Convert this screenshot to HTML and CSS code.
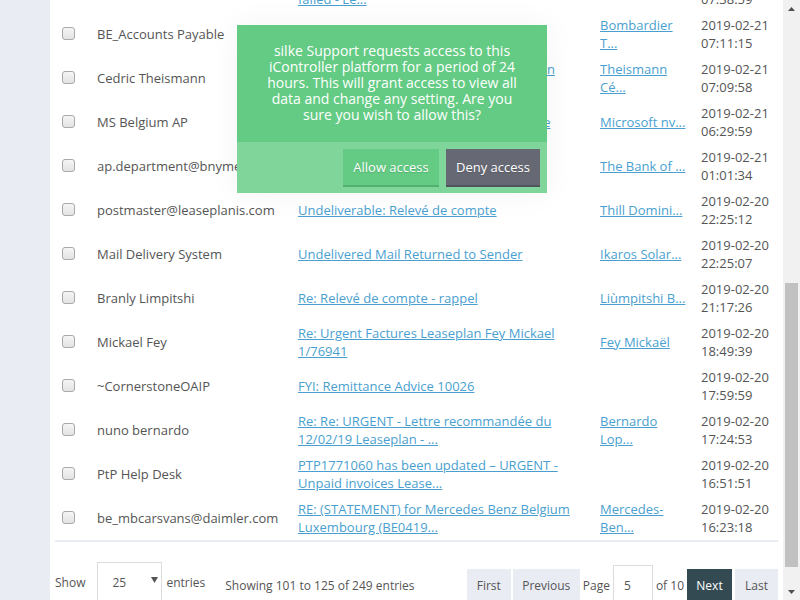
FILE: index.html
```html
<!DOCTYPE html>
<html>
<head>
<meta charset="utf-8">
<link rel="stylesheet" href="styles.css">
</head>
<body>
<div class="page">
  <div class="side"></div>
  <div class="main">
    <table class="grid">
      <colgroup>
        <col class="c-cb"><col class="c-name"><col class="c-subj"><col class="c-comp"><col class="c-date">
      </colgroup>
      <tbody>
        <tr><td><span class="cb"></span></td><td class="name">MAILER-DAEMON</td><td class="subj"><a href="#">Delivery Status Notification (Delivery<br>failed - Le...</a></td><td class="comp"></td><td class="date">2019-02-21 07:38:59</td></tr>
        <tr><td><span class="cb"></span></td><td class="name">BE_Accounts Payable</td><td class="subj"><a href="#">Payment Advice 4500123</a></td><td class="comp"><a href="#">Bombardier T...</a></td><td class="date">2019-02-21 07:11:15</td></tr>
        <tr><td><span class="cb"></span></td><td class="name">Cedric Theismann</td><td class="subj"><a href="#">Re: Herinnering openstaande facturen van Theismann</a></td><td class="comp"><a href="#">Theismann Cé...</a></td><td class="date">2019-02-21 07:09:58</td></tr>
        <tr><td><span class="cb"></span></td><td class="name">MS Belgium AP</td><td class="subj"><a href="#">Remittance Advice: Microsoft NV Belgique</a></td><td class="comp"><a href="#">Microsoft nv...</a></td><td class="date">2019-02-21 06:29:59</td></tr>
        <tr><td><span class="cb"></span></td><td class="name">ap.department@bnymellon.com</td><td class="subj"><a href="#">Payment Notification</a></td><td class="comp"><a href="#">The Bank of ...</a></td><td class="date">2019-02-21 01:01:34</td></tr>
        <tr><td><span class="cb"></span></td><td class="name">postmaster@leaseplanis.com</td><td class="subj"><a href="#">Undeliverable: Relevé de compte</a></td><td class="comp"><a href="#">Thill Domini...</a></td><td class="date">2019-02-20 22:25:12</td></tr>
        <tr><td><span class="cb"></span></td><td class="name">Mail Delivery System</td><td class="subj"><a href="#">Undelivered Mail Returned to Sender</a></td><td class="comp"><a href="#">Ikaros Solar...</a></td><td class="date">2019-02-20 22:25:07</td></tr>
        <tr><td><span class="cb"></span></td><td class="name">Branly Limpitshi</td><td class="subj"><a href="#">Re: Relevé de compte - rappel</a></td><td class="comp"><a href="#">Liùmpitshi B...</a></td><td class="date">2019-02-20 21:17:26</td></tr>
        <tr><td><span class="cb"></span></td><td class="name">Mickael Fey</td><td class="subj"><a href="#">Re: Urgent Factures Leaseplan Fey Mickael 1/76941</a></td><td class="comp"><a href="#">Fey Mickaël</a></td><td class="date">2019-02-20 18:49:39</td></tr>
        <tr><td><span class="cb"></span></td><td class="name">~CornerstoneOAIP</td><td class="subj"><a href="#">FYI: Remittance Advice 10026</a></td><td class="comp"></td><td class="date">2019-02-20 17:59:59</td></tr>
        <tr><td><span class="cb"></span></td><td class="name">nuno bernardo</td><td class="subj"><a href="#">Re: Re: URGENT - Lettre recommandée du 12/02/19 Leaseplan - ...</a></td><td class="comp"><a href="#">Bernardo Lop...</a></td><td class="date">2019-02-20 17:24:53</td></tr>
        <tr><td><span class="cb"></span></td><td class="name">PtP Help Desk</td><td class="subj"><a href="#">PTP1771060 has been updated – URGENT - Unpaid invoices Lease...</a></td><td class="comp"></td><td class="date">2019-02-20 16:51:51</td></tr>
        <tr><td><span class="cb"></span></td><td class="name">be_mbcarsvans@daimler.com</td><td class="subj"><a href="#">RE: (STATEMENT) for Mercedes Benz Belgium Luxembourg (BE0419...</a></td><td class="comp"><a href="#">Mercedes-Ben...</a></td><td class="date">2019-02-20 16:23:18</td></tr>
      </tbody>
    </table>
    <div class="foot">
      <div class="len">
        <span>Show</span>
        <div class="select"><span>25</span><svg class="caret" width="7" height="6" viewBox="0 0 7 6"><path d="M0 0H7L3.5 6Z" fill="#555"/></svg></div>
        <span>entries</span>
      </div>
      <div class="info">Showing 101 to 125 of 249 entries</div>
      <div class="pager">
        <span class="pbtn first">First</span>
        <span class="pbtn prev">Previous</span>
        <span class="plabel">Page</span>
        <span class="pinput">5</span>
        <span class="plabel">of 10</span>
        <span class="pbtn next">Next</span>
        <span class="pbtn last">Last</span>
      </div>
    </div>
  </div>
  <div class="sb">
    <div class="sb-btn"><svg width="7" height="4" viewBox="0 0 7 4"><path d="M0 4H7L3.5 0Z" fill="#505050"/></svg></div>
    <div class="sb-track"><div class="thumb"></div></div>
    <div class="sb-btn"><svg width="7" height="4" viewBox="0 0 7 4"><path d="M0 0H7L3.5 4Z" fill="#505050"/></svg></div>
  </div>

  <div class="dialog">
    <div class="dmsg">silke Support requests access to this iController platform for a period of 24 hours. This will grant access to view all data and change any setting. Are you sure you wish to allow this?</div>
    <div class="dfoot">
      <span class="dbtn allow">Allow access</span>
      <span class="dbtn deny">Deny access</span>
    </div>
  </div>
</div>
</body>
</html>
```

FILE: styles.css
```css
html, body {
  margin: 0;
  padding: 0;
}
body {
  font-family: "Open Sans", "DejaVu Sans", sans-serif;
  font-size: 13px;
  color: #555;
  background: #fff;
}
.page {
  position: relative;
  display: flex;
  height: 600px;
  overflow: hidden;
}
.side {
  width: 50px;
  flex: none;
  background: #e9ecf3;
}
.main {
  flex: 1;
  min-width: 0;
  background: #fff;
  padding: 0 5px;
}
.grid {
  width: 100%;
  table-layout: fixed;
  border-collapse: collapse;
  margin-top: -32px;
  border-bottom: 2px solid #e9ecf3;
}
.c-cb { width: 42px; }
.c-name { width: 201px; }
.c-subj { width: 302px; }
.c-comp { width: 101px; }
.grid td {
  padding: 4px 0;
  height: 36px;
  line-height: 18px;
  vertical-align: middle;
}
.grid td.name { padding-right: 8px; white-space: nowrap; }
.grid td.subj { padding-right: 12px; }
.grid td.comp { padding-right: 12px; }
.cb {
  display: block;
  width: 11px;
  height: 11px;
  margin-left: 7px;
  margin-bottom: 2px;
  border: 1px solid #a9a9a9;
  border-radius: 3px;
  background: linear-gradient(#f5f5f5, #e3e3e3);
}
a {
  color: #4a9fd0;
  text-decoration: underline;
}
.foot {
  display: flex;
  align-items: flex-start;
  padding-top: 20px;
  font-size: 12px;
}
.len {
  display: flex;
  align-items: center;
  height: 40px;
}
.select {
  box-sizing: border-box;
  width: 65px;
  height: 40px;
  margin: 0 4px 0 12px;
  padding: 0 3px 0 14px;
  border: 1px solid #dcdcdc;
  display: flex;
  align-items: center;
  background: #fff;
}
.caret {
  margin-left: auto;
  margin-bottom: 4px;
}
.info {
  margin-left: 20px;
  margin-top: 15px;
  line-height: 18px;
}
.pager {
  margin-left: auto;
  margin-top: 3px;
  height: 40px;
  display: flex;
  align-items: center;
  gap: 3px;
}
.pbtn {
  box-sizing: border-box;
  height: 32px;
  display: flex;
  align-items: center;
  justify-content: center;
  background: #e9ecf3;
  color: #555;
}
.first { width: 44px; margin-right: -1px; }
.prev { width: 67px; }
.next { width: 45px; background: #344a53; color: #fff; }
.last { width: 43px; }
.pinput {
  box-sizing: border-box;
  width: 40px;
  height: 40px;
  padding-left: 10px;
  border: 1px solid #dcdcdc;
  display: flex;
  align-items: center;
  background: #fff;
}
.sb {
  width: 17px;
  flex: none;
  background: #f1f1f1;
  display: flex;
  flex-direction: column;
}
.sb-btn {
  height: 17px;
  flex: none;
  display: flex;
  align-items: center;
  justify-content: center;
}
.sb-track {
  flex: 1;
  padding: 0 2px;
}
.thumb {
  margin-top: 266px;
  height: 284px;
  background: #c1c1c1;
}
.dialog {
  position: absolute;
  left: 237px;
  top: 25px;
  width: 310px;
  box-shadow: 0 0 30px rgba(0, 0, 0, 0.05);
}
.dmsg {
  background: #63cb83;
  color: #fff;
  font-size: 14px;
  line-height: 16px;
  text-align: center;
  padding: 18px 25px 19px;
}
.dfoot {
  background: #80d59a;
  padding: 7px 7px 6px;
  display: flex;
  justify-content: flex-end;
  gap: 7px;
}
.dbtn {
  box-sizing: border-box;
  height: 38px;
  padding: 0 10px;
  display: flex;
  align-items: center;
  justify-content: center;
  font-size: 13px;
  color: #fff;
  border-bottom: 2px solid;
  text-shadow: 0 1px 1px rgba(0, 0, 0, 0.15);
}
.allow { width: 96px; background: #63cb83; border-color: #52b171; }
.deny { width: 94px; background: #666974; border-color: #50535c; }
```
